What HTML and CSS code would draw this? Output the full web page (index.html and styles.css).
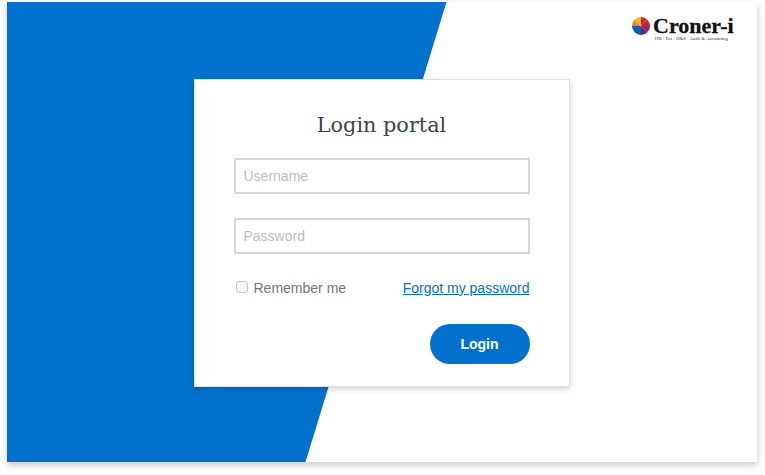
FILE: index.html
```html
<!DOCTYPE html>
<html>
<head>
    <meta charset="UTF-8">
    <title>Login portal</title>
    <link rel="stylesheet" href="styles.css">
</head>
<body>
    <div class="window">
        <div class="blue-panel"></div>
        <div class="logo">
            <div class="logo-top">
                <svg class="logo-mark" width="18" height="18" viewBox="0 0 18 18">
                    <path d="M9 9L2.64 2.64A9 9 0 0 0 0 9z" fill="#ea8a1e"/>
                    <path d="M9 9V0A9 9 0 0 0 2.64 2.64z" fill="#f4b41f"/>
                    <path d="M9 9V0A9 9 0 0 1 15.36 2.64z" fill="#d8262c"/>
                    <path d="M9 9L15.36 2.64A9 9 0 0 1 18 9z" fill="#c0203c"/>
                    <path d="M9 9H18A9 9 0 0 1 15.36 15.36z" fill="#a01f63"/>
                    <path d="M9 9L15.36 15.36A9 9 0 0 1 9 18z" fill="#6d2077"/>
                    <path d="M9 9V18A9 9 0 0 1 0 9z" fill="#0b62ab"/>
                </svg>
                <span class="logo-name">Croner-i</span>
            </div>
            <div class="logo-tag">HR · Tax · H&amp;S · Audit &amp; Accounting</div>
        </div>
        <div class="login-card">
            <h1>Login portal</h1>
            <input type="text" class="field" placeholder="Username">
            <input type="password" class="field" placeholder="Password">
            <div class="options">
                <label class="remember"><input type="checkbox" class="check"> Remember me</label>
                <a href="#" class="forgot">Forgot my password</a>
            </div>
            <div class="actions">
                <button type="button" class="login-button">Login</button>
            </div>
        </div>
    </div>
</body>
</html>
```

FILE: styles.css
```css
html, body {
    margin: 0;
    height: 100%;
    overflow: hidden;
}

body {
    background-color: #ffffff;
    font-family: "Liberation Sans", Arial, sans-serif;
    padding: 2px 8px 13px 7px;
    box-sizing: border-box;
}

.window {
    position: relative;
    height: 460px;
    background-color: #ffffff;
    box-shadow: 0 3px 7px rgba(0, 0, 0, 0.22);
    display: flex;
    align-items: center;
    justify-content: center;
}

.blue-panel {
    position: absolute;
    left: -0.5px;
    top: 0;
    bottom: 0;
    width: 440px;
    background-color: #0271ce;
    clip-path: polygon(0 0, 100% 0, 299px 100%, 0 100%);
}

.logo {
    position: absolute;
    top: 14px;
    left: 625px;
    width: 110px;
}

.logo-top {
    display: flex;
    align-items: center;
    gap: 3px;
}

.logo-name {
    font-family: "Liberation Serif", serif;
    font-weight: bold;
    font-size: 22px;
    line-height: 20px;
    color: #111111;
    -webkit-text-stroke: 0.3px #111111;
}

.logo-tag {
    font-family: "Liberation Serif", serif;
    font-size: 4.7px;
    line-height: 6px;
    margin-left: 23px;
    color: #333333;
    white-space: nowrap;
}

.login-card {
    position: relative;
    width: 376px;
    height: 308px;
    box-sizing: border-box;
    padding: 0 39px;
    margin-top: 2px;
    margin-right: 1px;
    background-color: #ffffff;
    border: 1px solid #dcdfe3;
    box-shadow: 0 2px 6px rgba(0, 0, 0, 0.18);
}

h1 {
    margin: 29px 0 17px;
    text-align: center;
    font-family: "DejaVu Serif", Georgia, serif;
    font-weight: normal;
    font-size: 20.8px;
    line-height: 32px;
    color: #3f4350;
}

.field {
    display: block;
    width: 100%;
    height: 36px;
    box-sizing: border-box;
    margin-bottom: 24px;
    padding: 0 8px;
    border: 2px solid #d6d6d6;
    font-family: "Liberation Sans", Arial, sans-serif;
    font-size: 14px;
    outline: none;
}

.field::placeholder {
    color: #bdbdbd;
}

.options {
    display: flex;
    align-items: center;
    justify-content: space-between;
    margin-top: -1px;
    height: 22px;
    font-size: 14px;
}

.remember {
    display: flex;
    align-items: center;
    gap: 6px;
    color: #757575;
}

.check {
    appearance: none;
    width: 12px;
    height: 12px;
    margin: 0 0 2px 2px;
    background-color: #f4f5f6;
    border: 1px solid #c6cad0;
    border-radius: 3px;
}

.forgot {
    color: #0271ce;
}

.actions {
    display: flex;
    justify-content: flex-end;
    margin-top: 25px;
}

.login-button {
    width: 100px;
    height: 40px;
    border: none;
    border-radius: 20px;
    background-color: #0271ce;
    color: #ffffff;
    font-family: "Liberation Sans", Arial, sans-serif;
    font-size: 14px;
    font-weight: bold;
}
```
